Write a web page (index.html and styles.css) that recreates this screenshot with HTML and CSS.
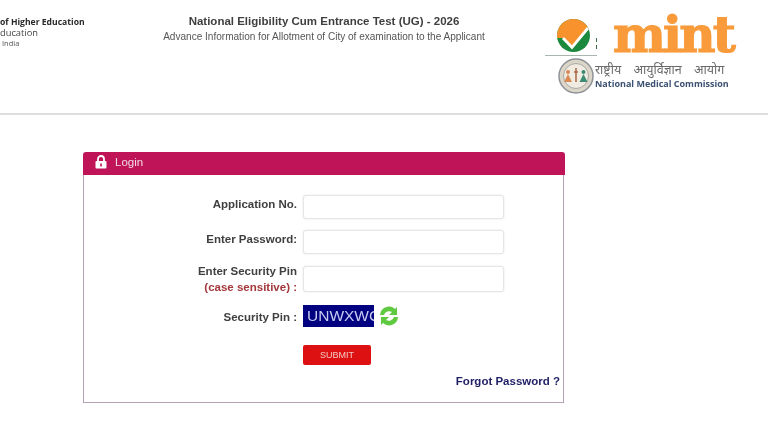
FILE: index.html
```html
<!DOCTYPE html>
<html lang="en">
<head>
<meta charset="utf-8">
<title>NEET UG 2026 Login</title>
<link rel="stylesheet" href="styles.css">
</head>
<body>
<header class="top">
  <div class="ministry">
    <div class="m1">of Higher Education</div>
    <div class="m2">ducation</div>
    <div class="m3">India</div>
  </div>
  <div class="titles">
    <div class="t1">National Eligibility Cum Entrance Test (UG) - 2026</div>
    <div class="t2">Advance Information for Allotment of City of examination to the Applicant</div>
  </div>
  <div class="logos">
    <div class="logo-row">
      <svg class="neet" width="54" height="42" viewBox="0 0 54 42">
        <defs><clipPath id="disc"><circle cx="28.500" cy="20.500" r="16.500"/></clipPath></defs>
        <circle cx="28.500" cy="20.500" r="16.500" fill="#1b8a3f"/>
        <path d="M0 0H54V8L42 13 27 32 19 23H0z" fill="#f7922d" clip-path="url(#disc)"/>
        <path d="M18 23l9 9.500L43 13" fill="none" stroke="#fff" stroke-width="2.800" clip-path="url(#disc)"/>
        <path d="M0 40.500h52" stroke="#aab5ad" stroke-width="1"/>
        <path d="M51.500 23v4M51.500 30v4" stroke="#3c6a48" stroke-width="1"/>
      </svg>
      <span class="mint">mint</span>
    </div>
    <div class="logo-row nmc-row">
      <svg class="emblem" width="36" height="36" viewBox="0 0 36 36">
        <circle cx="18" cy="18" r="17" fill="#dcd6c8" stroke="#8f9398" stroke-width="1.500"/>
        <circle cx="18" cy="18" r="12.500" fill="#f1ece2" stroke="#a9a9a6" stroke-width="1"/>
        <circle cx="10" cy="14" r="2" fill="#d98a55"/>
        <path d="M6 24l4-8 4 8z" fill="#d98a55"/>
        <circle cx="25.500" cy="14" r="2" fill="#3f8a72"/>
        <path d="M21.500 24l4-8 4 8z" fill="#3f8a72"/>
        <path d="M18 10v14M16 14h4" stroke="#a8654a" stroke-width="1.500"/>
      </svg>
      <div class="nmc-text">
        <div class="hi">राष्ट्रीय आयुर्विज्ञान आयोग</div>
        <div class="en">National Medical Commission</div>
      </div>
    </div>
  </div>
</header>

<main class="panel">
  <div class="panel-head">
    <svg class="lock" width="12" height="14" viewBox="0 0 12 14">
      <path d="M3 6V4a3 3 0 0 1 6 0v2" fill="none" stroke="#fff" stroke-width="1.800"/>
      <rect x="0.500" y="6" width="11" height="7.500" rx="1" fill="#fff"/>
      <rect x="5.200" y="8.500" width="1.600" height="3" fill="#bf1558"/>
    </svg>
    <span>Login</span>
  </div>
  <form class="panel-body">
    <div class="form-grid">
      <label class="lbl raised">Application No.</label>
      <div class="field"></div>
      <label class="lbl raised">Enter Password:</label>
      <div class="field"></div>
      <label class="lbl two">Enter Security Pin<br><span class="case">(case sensitive) :</span></label>
      <div class="field tall"></div>
      <label class="lbl pin">Security Pin :</label>
      <div class="captcha-row">
        <div class="captcha">UNWXWG</div>
        <svg class="refresh" width="24" height="24" viewBox="0 0 24 24">
          <path d="M3 11a9 9 0 0 1 15-6l2-2v8h-8l3-3a5.500 5.500 0 0 0-8 3z" fill="#5fc93f"/>
          <path d="M21 13a9 9 0 0 1-15 6l-2 2v-8h8l-3 3a5.500 5.500 0 0 0 8-3z" fill="#5fc93f"/>
        </svg>
      </div>
      <div></div>
      <div class="submit">SUBMIT</div>
    </div>
    <div class="forgot">Forgot Password ?</div>
  </form>
</main>
</body>
</html>
```
FILE: styles.css
```css
* { box-sizing: border-box; }
html, body { margin: 0; padding: 0; }
body {
  width: 768px;
  height: 432px;
  overflow: hidden;
  background: #fff;
  font-family: "Liberation Sans", Arial, sans-serif;
  color: #3c3c3c;
  filter: blur(0.35px);
}
.top {
  display: grid;
  grid-template-columns: 85px 460px 1fr;
  height: 115px;
  border-bottom: 2px solid #dedede;
}
.ministry {
  padding-top: 17px;
  font-family: "Open Sans", sans-serif;
  white-space: nowrap;
}
.m1 { font-size: 8.600px; line-height: 11px; font-weight: 700; color: #2a2a2a; }
.m2 { font-size: 9.300px; line-height: 10px; color: #444; }
.m3 { font-size: 7.500px; line-height: 10px; color: #555; padding-left: 2px; }
.titles {
  padding: 14px 0 0 18px;
  text-align: center;
}
.t1 { font-size: 11.500px; line-height: 15px; font-weight: 700; color: #3f3f3f; }
.t2 { font-size: 10.050px; line-height: 16px; color: #555; }
.logos { padding-top: 15px; }
.logo-row { display: flex; align-items: flex-end; }
.neet { flex: none; }
.mint {
  font-family: "DejaVu Serif", serif;
  font-weight: 700;
  font-size: 50px;
  line-height: 40px;
  letter-spacing: -2.800px;
  color: #f99b3b;
  -webkit-text-stroke: 1.200px #f99b3b;
  margin-left: 14px;
  height: 42px;
}
.nmc-row { align-items: center; margin: 1px 0 0 13px; }
.emblem { flex: none; }
.nmc-text { margin-left: 1px; white-space: nowrap; }
.hi { font-size: 12.500px; line-height: 15px; word-spacing: 9px; color: #6a6a6a; font-family: "Noto Sans", "DejaVu Sans", sans-serif; }
.en { font-family: "Open Sans", sans-serif; font-size: 9px; line-height: 13px; font-weight: 700; color: #3b5173; }
.panel {
  width: 482px;
  margin: 37px 0 0 83px;
}
.panel-head {
  display: flex;
  align-items: center;
  height: 23px;
  padding: 0 0 3px 12px;
  gap: 8px;
  background: #bf1558;
  border-radius: 3px 3px 0 0;
  color: #f1d9e2;
  font-size: 11.500px;
}
.lock { flex: none; }
.panel-body {
  width: 481px;
  height: 228px;
  border: 1px solid #b3a3b3;
  border-top: 0;
  padding-top: 20px;
}
.form-grid {
  display: grid;
  grid-template-columns: 213px 201px;
  grid-template-rows: 24px 24px 27px 24px 27px;
  column-gap: 6px;
  row-gap: 11px;
  align-items: end;
}
.lbl {
  align-self: center;
  text-align: right;
  font-size: 11.500px;
  font-weight: 700;
  color: #3f3f3f;
}
.raised { padding-bottom: 6px; }
.two { line-height: 16px; }
.pin { padding-top: 4px; }
.case { color: #a5383c; }
.field {
  height: 24px;
  background: #fff;
  border: 1px solid #e6e6e6;
  border-radius: 3px;
  box-shadow: 0 0 2px rgba(0, 0, 0, 0.12);
}
.tall { height: 26px; }
.captcha-row { display: flex; align-items: flex-end; height: 24px; }
.captcha {
  width: 71px;
  height: 22px;
  overflow: hidden;
  background: #000080;
  color: #c8cdf0;
  font-size: 15.500px;
  line-height: 22px;
  padding-left: 4px;
  white-space: nowrap;
}
.refresh { flex: none; margin: 0 0 -1px 3px; }
.submit {
  width: 68px;
  height: 20px;
  background: #dd1111;
  border-radius: 2px;
  color: #f3c9c4;
  font-size: 9px;
  line-height: 20px;
  text-align: center;
}
.forgot {
  margin: 10px 3px 0 0;
  text-align: right;
  font-size: 11.500px;
  font-weight: 700;
  color: #1f1f66;
}
```
